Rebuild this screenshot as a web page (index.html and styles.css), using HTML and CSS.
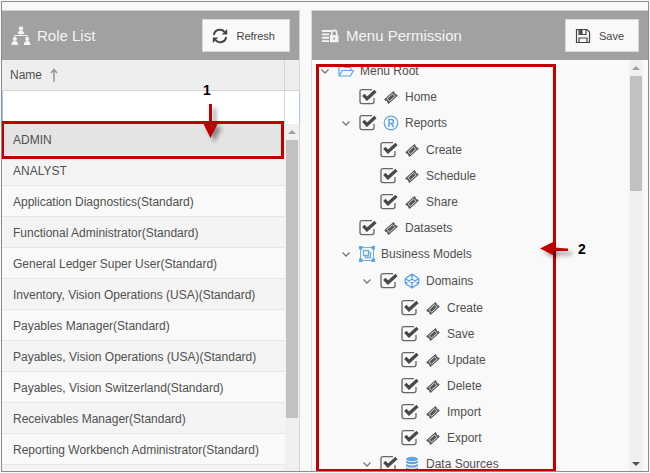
FILE: index.html
```html
<!DOCTYPE html>
<html lang="en">
<head>
<meta charset="utf-8">
<meta name="viewport" content="width=device-width, initial-scale=1">
<title>Role Menu Permission</title>
<link rel="stylesheet" href="styles.css">
</head>
<body>
<svg class="defs" aria-hidden="true">
  <symbol id="tag" viewBox="0 0 16 16">
    <g transform="translate(0 .5) rotate(-42 8 8)">
      <path d="M1.800 4.800h12.400v1.900a1.500 1.500 0 0 0 0 2.600v1.900H1.800V9.300a1.500 1.500 0 0 0 0-2.600z" fill="#585858"/>
      <path d="M4.300 6.200h7.400v3.600H4.300z" fill="none" stroke="#e8e8e8" stroke-width=".8"/>
    </g>
  </symbol>
  <symbol id="chevron" viewBox="0 0 12 12"><path d="M2.500 4.500 6 8l3.500-3.500" fill="none" stroke="#777" stroke-width="1.300"/></symbol>
  <symbol id="folder" viewBox="0 0 16 16">
    <path d="M1 12.500V3.500q0-1 1-1h3.500l1.500 2h5q1 0 1 1v2M1.200 13l3-5.500h11.200L12.500 13z" fill="none" stroke="#5fa5e2" stroke-width="1.200" stroke-linejoin="round"/>
  </symbol>
  <symbol id="reg" viewBox="0 0 16 16">
    <circle cx="8" cy="8" r="6.800" fill="none" stroke="#5fa5e2" stroke-width="1.200"/>
    <path d="M6 12V4.500h2.400a2 2 0 0 1 0 4.100H6m2.400 0L10.600 12" fill="none" stroke="#5fa5e2" stroke-width="1.500"/>
  </symbol>
  <symbol id="group" viewBox="0 0 16 16">
    <g fill="none" stroke="#6eafe6"><path d="M1.500 1.500h13v13h-13z"/><path d="M4.500 4.500h5v5h-5zM9.500 6.500h2v5h-5v-2" stroke-width="1.300"/></g>
    <path d="M0 0h3.500v3.500H0zM12.500 0H16v3.500h-3.500zM0 12.500h3.500V16H0zM12.500 12.500H16V16h-3.500z" fill="#5fa5e2"/>
  </symbol>
  <symbol id="domain" viewBox="0 0 16 16">
    <path d="M8 1.200 14.700 5.500v5L8 14.800 1.300 10.500v-5zM1.300 5.500 8 10l6.700-4.500M1.300 10.500 8 6l6.700 4.500M8 1.200V6M8 10v4.800" fill="none" stroke="#5fa5e2" stroke-width="1.400" stroke-linejoin="round"/>
  </symbol>
  <symbol id="database" viewBox="0 0 16 16">
    <g fill="#5fa5e2"><ellipse cx="8" cy="3" rx="6" ry="2.200"/><path d="M2 4.500q6 3 12 0v2.300q-6 3-12 0zM2 8q6 3 12 0v2.300q-6 3-12 0zM2 11.500q6 3 12 0v2.300q-6 3-12 0z"/></g>
  </symbol>
</svg>

<main class="frame">
  <section class="panel roles">
    <header class="bar">
      <svg class="bar-icon" viewBox="0 0 20 20" aria-hidden="true">
        <g fill="#f4f4f4"><circle cx="10" cy="2.500" r="2.200"/><path d="M6.800 8q0-3.500 3.200-3.500T13.200 8z"/><circle cx="3.800" cy="13" r="2"/><path d="M.5 19q0-4 3.300-4t3.300 4z"/><circle cx="16.200" cy="13" r="2"/><path d="M12.900 19q0-4 3.300-4t3.300 4z"/></g>
        <path d="M3.800 11.500V9.500h12.400v2M10 8v1.500" fill="none" stroke="#f4f4f4" stroke-width="1"/>
      </svg>
      <h2 class="title">Role List</h2>
      <button class="button" type="button">
        <svg class="button-icon" viewBox="0 0 16 16" aria-hidden="true">
          <g fill="none" stroke="#444" stroke-width="2"><path d="M1.800 7A6.200 6.200 0 0 1 12.500 3.800"/><path d="M14.200 9A6.200 6.200 0 0 1 3.500 12.200"/></g>
          <path d="M15.200 1v5.500H9.700zM.8 15V9.500h5.500z" fill="#444"/>
        </svg>
        Refresh
      </button>
    </header>
    <div class="columns">
      <div class="column-name">Name
        <svg class="sort" viewBox="0 0 8 14" aria-hidden="true"><path d="M4 14V2M1 5l3-3.500L7 5" fill="none" stroke="#999" stroke-width="1.500"/></svg>
      </div>
    </div>
    <div class="filter"><input class="filter-input" type="text" aria-label="Filter by name"></div>
    <div class="list-area">
      <ul class="list">
        <li class="role selected">ADMIN</li>
        <li class="role">ANALYST</li>
        <li class="role">Application Diagnostics(Standard)</li>
        <li class="role">Functional Administrator(Standard)</li>
        <li class="role">General Ledger Super User(Standard)</li>
        <li class="role">Inventory, Vision Operations (USA)(Standard)</li>
        <li class="role">Payables Manager(Standard)</li>
        <li class="role">Payables, Vision Operations (USA)(Standard)</li>
        <li class="role">Payables, Vision Switzerland(Standard)</li>
        <li class="role">Receivables Manager(Standard)</li>
        <li class="role">Reporting Workbench Administrator(Standard)</li>
        <li class="role"></li>
      </ul>
      <div class="scrollbar" aria-hidden="true"><span class="up"></span><span class="thumb thumb-long"></span></div>
    </div>
  </section>

  <section class="panel menu">
    <header class="bar">
      <svg class="bar-icon" viewBox="0 0 20 20" aria-hidden="true">
        <path d="M1 4.500h11M1 8.200h8M1 12h8M1 15.700h8" stroke="#f4f4f4" stroke-width="2.200"/>
        <path d="M10 9h9.500v8H10z" fill="#f4f4f4"/><path d="M12 9V6.500a2.700 2.700 0 0 1 5.400 0V9" fill="none" stroke="#f4f4f4" stroke-width="1.800"/><path d="M14.700 11.500v3" stroke="#a1a1a1" stroke-width="1.500"/>
      </svg>
      <h2 class="title">Menu Permission</h2>
      <button class="button" type="button">
        <svg class="button-icon" viewBox="0 0 16 16" aria-hidden="true">
          <path d="M1.500 1.500h10.500l2.500 2.500v10.500h-13z" fill="none" stroke="#444" stroke-width="1.200"/>
          <path d="M4 1.500v5h7v-5M4 14.500v-4.500h8v4.500" fill="none" stroke="#444" stroke-width="1.200"/><path d="M4.500 2h3v4h-3z" fill="#444"/>
        </svg>
        Save
      </button>
    </header>
    <div class="tree-area">
      <div class="tree-view">
        <ul class="tree">
          <li>
            <div class="node"><svg class="toggle"><use href="#chevron"/></svg><svg class="icon"><use href="#folder"/></svg>Menu Root</div>
            <ul class="branch top">
              <li><label class="node leaf"><input class="check" type="checkbox" checked><svg class="icon"><use href="#tag"/></svg>Home</label></li>
              <li>
                <label class="node"><svg class="toggle"><use href="#chevron"/></svg><input class="check" type="checkbox" checked><svg class="icon"><use href="#reg"/></svg>Reports</label>
                <ul class="branch">
                  <li><label class="node leaf"><input class="check" type="checkbox" checked><svg class="icon"><use href="#tag"/></svg>Create</label></li>
                  <li><label class="node leaf"><input class="check" type="checkbox" checked><svg class="icon"><use href="#tag"/></svg>Schedule</label></li>
                  <li><label class="node leaf"><input class="check" type="checkbox" checked><svg class="icon"><use href="#tag"/></svg>Share</label></li>
                </ul>
              </li>
              <li><label class="node leaf"><input class="check" type="checkbox" checked><svg class="icon"><use href="#tag"/></svg>Datasets</label></li>
              <li>
                <div class="node"><svg class="toggle"><use href="#chevron"/></svg><svg class="icon"><use href="#group"/></svg>Business Models</div>
                <ul class="branch">
                  <li>
                    <label class="node"><svg class="toggle"><use href="#chevron"/></svg><input class="check" type="checkbox" checked><svg class="icon"><use href="#domain"/></svg>Domains</label>
                    <ul class="branch">
                      <li><label class="node leaf"><input class="check" type="checkbox" checked><svg class="icon"><use href="#tag"/></svg>Create</label></li>
                      <li><label class="node leaf"><input class="check" type="checkbox" checked><svg class="icon"><use href="#tag"/></svg>Save</label></li>
                      <li><label class="node leaf"><input class="check" type="checkbox" checked><svg class="icon"><use href="#tag"/></svg>Update</label></li>
                      <li><label class="node leaf"><input class="check" type="checkbox" checked><svg class="icon"><use href="#tag"/></svg>Delete</label></li>
                      <li><label class="node leaf"><input class="check" type="checkbox" checked><svg class="icon"><use href="#tag"/></svg>Import</label></li>
                      <li><label class="node leaf"><input class="check" type="checkbox" checked><svg class="icon"><use href="#tag"/></svg>Export</label></li>
                    </ul>
                  </li>
                  <li><label class="node"><svg class="toggle"><use href="#chevron"/></svg><input class="check" type="checkbox" checked><svg class="icon"><use href="#database"/></svg>Data Sources</label></li>
                </ul>
              </li>
            </ul>
          </li>
        </ul>
      </div>
      <div class="scrollbar" aria-hidden="true"><span class="up"></span><span class="thumb thumb-short"></span><span class="down"></span></div>
    </div>
  </section>

  <div class="mark mark-role"></div>
  <div class="mark mark-tree"></div>
  <span class="callout callout-one">1</span>
  <svg class="arrow arrow-down" viewBox="0 0 18 36" aria-hidden="true"><path d="M7 1h3v19h6L8.500 35 1 20h6z" fill="#c00000"/></svg>
  <svg class="arrow arrow-left" viewBox="0 0 32 16" aria-hidden="true"><path d="M1 7.500 14 1v5.500l15 1v2.500H14v4z" fill="#c00000"/></svg>
  <span class="callout callout-two">2</span>
</main>
</body>
</html>
```

FILE: styles.css
```css
* {
  box-sizing: border-box;
}

body {
  margin: 0;
  padding: 1px;
  height: 100vh;
  background: #f9f9f9;
  color: #505050;
  font: 12px/16px "Liberation Sans", Arial, sans-serif;
}

ul {
  margin: 0;
  padding: 0;
  list-style: none;
}

.defs {
  position: absolute;
  width: 0;
  height: 0;
}

.frame {
  position: relative;
  display: grid;
  grid-template-columns: 298fr 337fr;
  grid-template-rows: minmax(0, 1fr);
  column-gap: 11px;
  height: 100%;
  padding-top: 8px;
  border: 1px solid #8c8c8c;
  background: #f9f9f9;
  overflow: hidden;
}

.panel {
  display: flex;
  flex-direction: column;
  min-width: 0;
  min-height: 0;
  border-top: 1px solid #cfcfcf;
}

.roles {
  border-right: 1px solid #d4d4d4;
}

.menu {
  border-left: 1px solid #dcdcdc;
}

.bar {
  display: flex;
  flex: none;
  align-items: center;
  height: 49px;
  padding: 0 9px;
  background: #a1a1a1;
}

.bar-icon {
  width: 20px;
  height: 20px;
  margin-right: 6px;
}

.menu .bar-icon {
  width: 18px;
  margin-right: 7px;
}

.title {
  margin: 0;
  color: #f4f4f4;
  font-size: 15px;
  font-weight: normal;
}

.button {
  display: flex;
  align-items: center;
  gap: 8px;
  height: 33px;
  margin-left: auto;
  padding: 0 14px 0 9px;
  border: 1px solid #d8d8d8;
  background: #f9f9f9;
  color: #444;
  font: inherit;
  font-size: 11px;
}

.button-icon {
  width: 16px;
  height: 16px;
}

.columns,
.filter {
  display: flex;
  flex: none;
  padding-right: 14px;
}

.columns {
  height: 31px;
  border-bottom: 1px solid #d4d4d4;
  background: #eee;
}

.column-name {
  display: flex;
  flex: 1;
  align-items: center;
  gap: 8px;
  padding-left: 8px;
  border-right: 1px solid #d4d4d4;
}

.sort {
  width: 8px;
  height: 14px;
}

.filter {
  height: 33px;
  margin-right: -1px;
  background: #fff;
  border: solid #a9c8ef;
  border-width: 0 1px;
}

.filter-input {
  flex: 1;
  min-width: 0;
  border: 0;
  border-right: 1px solid #d4d4d4;
  background: #fff;
  font: inherit;
  outline: none;
}

.list-area,
.tree-area {
  display: flex;
  flex: 1;
  min-height: 0;
  overflow: hidden;
}

.list {
  flex: 1;
}

.role {
  height: 31px;
  padding: 8px 0 0 11px;
  border-bottom: 1px solid #e6e6e6;
  background: #f9f9f9;
  line-height: 16px;
}

.role:nth-child(even) {
  background: #f4f4f4;
}

.role.selected {
  background: #e4e4e4;
}

.scrollbar {
  display: flex;
  flex: none;
  flex-direction: column;
  align-items: center;
  width: 14px;
  background: #f0f0f0;
}

.up {
  width: 8px;
  margin: 6px 0;
  border: 4px solid transparent;
  border-top: 0;
  border-bottom-color: #a0a0a0;
}

.down {
  width: 8px;
  margin: auto 0 5px;
  border: 4px solid transparent;
  border-bottom: 0;
  border-top-color: #505050;
}

.thumb {
  width: 12px;
  background: #c1c1c1;
}

.thumb-long {
  height: 80%;
}

.thumb-short {
  height: 28%;
}

.tree-area {
  padding-right: 5px;
}

.tree-view {
  flex: 1;
  min-width: 0;
  margin: 5px 0 0 7px;
  overflow: hidden;
}

.tree {
  margin-top: -7px;
}

.node {
  display: flex;
  align-items: center;
  height: 26px;
}

.leaf {
  padding-left: 19px;
}

.toggle {
  width: 12px;
  height: 12px;
  margin-right: 7px;
}

.check {
  appearance: none;
  width: 18px;
  height: 18px;
  margin: 0 6px 0 0;
  background: url("data:image/svg+xml,%3Csvg xmlns='http://www.w3.org/2000/svg' viewBox='0 0 18 18' fill='none' stroke='%23484848'%3E%3Cpath d='M13 1.600H3Q1 1.600 1 3.600v10q0 2 2 2h10q2 0 2-2V10' stroke='%23666' stroke-width='1.300'/%3E%3Cpath d='M4.300 6.800 8 10.700 16.500 3' stroke-width='3.200'/%3E%3C/svg%3E") center / 18px 18px no-repeat;
}

.icon {
  width: 16px;
  height: 16px;
  margin-right: 6px;
}

.branch {
  padding: 1px 0 0 21px;
}

.branch.top {
  padding-top: 0;
}

/* Callouts drawn over the panels */
.mark {
  position: absolute;
  border: 3px solid #c00000;
}

.mark-role {
  top: 119px;
  left: -1px;
  width: 283px;
  height: 38px;
}

.mark-tree {
  top: 62px;
  bottom: -1px;
  left: 314px;
  width: 240px;
}

.callout {
  position: absolute;
  color: #000;
  font-size: 14px;
  font-weight: bold;
}

.callout-one {
  top: 80px;
  left: 201px;
}

.callout-two {
  top: 239px;
  left: 576px;
}

.arrow {
  position: absolute;
  filter: drop-shadow(4px 4px 2px rgba(0, 0, 0, 0.4));
}

.arrow-down {
  top: 101px;
  left: 200px;
  width: 18px;
  height: 36px;
}

.arrow-left {
  top: 239px;
  left: 537px;
  width: 32px;
  height: 16px;
}
```
